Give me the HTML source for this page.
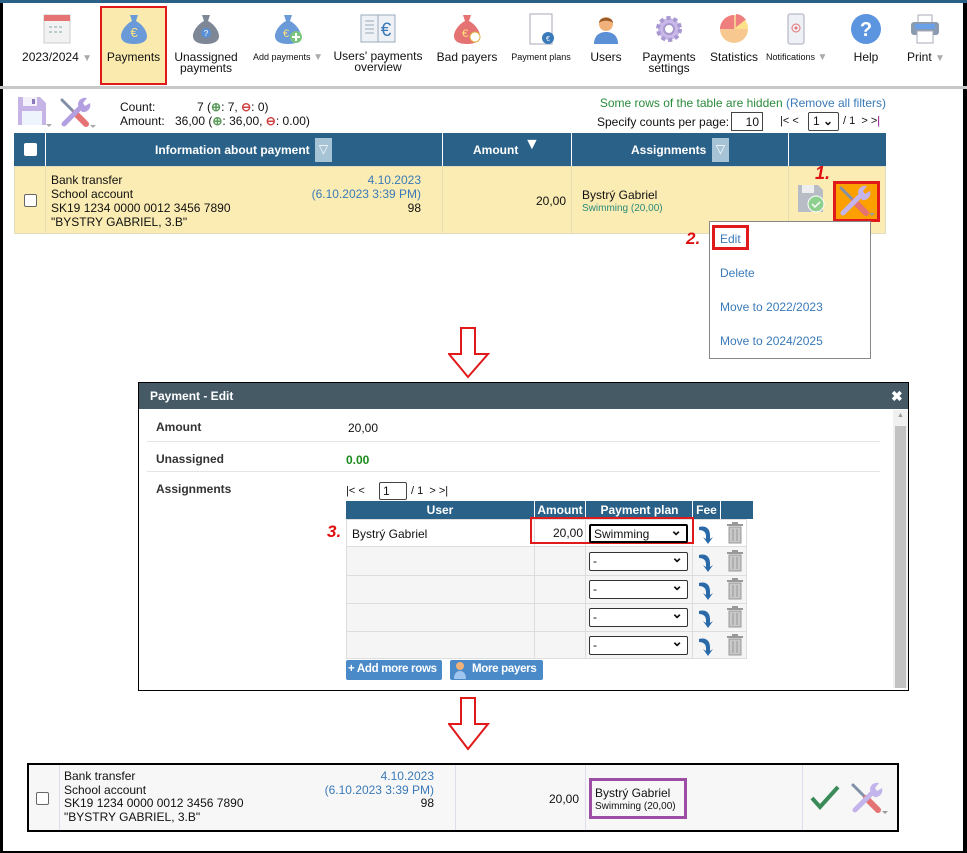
<!DOCTYPE html>
<html><head><meta charset="utf-8">
<style>
*{box-sizing:border-box;margin:0;padding:0}
body{width:967px;height:853px;background:#fff;font-family:"Liberation Sans",sans-serif;font-size:12px;color:#111;position:relative;overflow:hidden}
.a{position:absolute}
.tb{position:absolute;top:0;left:0;width:967px;height:89px;border-bottom:3px solid #c8c8c8;border-top:3px solid #2a5f88}
.ti{position:absolute;text-align:center;font-size:12px;line-height:11px;color:#111;white-space:nowrap}
.ti svg{display:block;margin:0 auto}
.ti div{margin-top:7px}
.tri{color:#aaa;font-size:10px}
.hdr{background:#2a6189;color:#fff;font-weight:bold;text-align:center}
.blue{color:#3a7ab8}
.red{color:#e01010;font-weight:bold;font-style:italic}
.sel{position:absolute;border:1px solid #333;background:#fff;height:19px;font-size:12px;padding:1px 3px;border-radius:2px}
.sel:after{content:"⌄";position:absolute;right:4px;top:-4px;font-weight:bold;font-size:14px}
</style></head><body>
<div class="a" style="left:0;top:0;width:3px;height:853px;background:#000"></div>
<div class="a" style="right:0;top:0;width:4px;height:853px;background:#000"></div>
<div class="a" style="left:0;bottom:0;width:967px;height:2px;background:#000"></div>

<div class="tb"></div>
<div class="a" style="left:100px;top:6px;width:67px;height:79px;background:#fbeaae;border:2px solid #e01a1a"></div>

<div class="ti" style="left:22px;top:13px;width:70px">
<svg width="32" height="32"><rect x="3" y="2" width="26" height="28" fill="#f2f2f2" stroke="#ccc"/><rect x="3" y="2" width="26" height="6" fill="#e57373"/><g fill="#bcc"><rect x="8" y="13" width="3" height="2"/><rect x="13" y="13" width="3" height="2"/><rect x="18" y="13" width="3" height="2"/><rect x="8" y="18" width="3" height="2"/><rect x="13" y="18" width="3" height="2"/><rect x="18" y="18" width="3" height="2"/></g></svg>
<div>2023/2024 <span class="tri">▼</span></div></div>

<div class="ti" style="left:102px;top:13px;width:63px">
<svg width="32" height="32"><path d="M12 2h8l-2 6c6 3 11 10 11 15 0 6-6 8-13 8S3 29 3 23c0-5 5-12 11-15z" fill="#6a9bd8"/><text x="16" y="24" font-size="13" fill="#ffe27a" text-anchor="middle" font-family="Liberation Sans">€</text></svg>
<div>Payments</div></div>

<div class="ti" style="left:172px;top:13px;width:68px">
<svg width="32" height="32"><path d="M12 2h8l-2 6c6 3 11 10 11 15 0 6-6 8-13 8S3 29 3 23c0-5 5-12 11-15z" fill="#7d8796"/><circle cx="16" cy="20" r="5" fill="#5b8fd6"/><text x="16" y="23" font-size="8" fill="#fff" text-anchor="middle" font-family="Liberation Sans">?</text></svg>
<div>Unassigned<br>payments</div></div>

<div class="ti" style="left:248px;top:13px;width:80px">
<svg width="32" height="32"><path d="M12 2h8l-2 6c6 3 11 10 11 15 0 6-6 8-13 8S3 29 3 23c0-5 5-12 11-15z" fill="#6a9bd8"/><text x="14" y="24" font-size="11" fill="#ffe27a" text-anchor="middle" font-family="Liberation Sans">€</text><circle cx="24" cy="24" r="6" fill="#7bc47b"/><path d="M24 20v8M20 24h8" stroke="#fff" stroke-width="2"/></svg>
<div style="font-size:9px">Add payments <span class="tri">▼</span></div></div>

<div class="ti" style="left:332px;top:12px;width:92px">
<svg width="38" height="33"><rect x="2" y="3" width="17" height="27" fill="#eef2f7" stroke="#9ab"/><rect x="19" y="3" width="17" height="27" fill="#eef2f7" stroke="#9ab"/><g stroke="#9ab"><path d="M6 9h9M6 13h9M6 17h9M6 21h9"/></g><text x="27" y="24" font-size="19" fill="#3a7ab8" text-anchor="middle" font-family="Liberation Sans">€</text></svg>
<div style="margin-top:6px">Users' payments<br>overview</div></div>

<div class="ti" style="left:434px;top:13px;width:66px">
<svg width="32" height="32"><path d="M12 2h8l-2 6c6 3 11 10 11 15 0 6-6 8-13 8S3 29 3 23c0-5 5-12 11-15z" fill="#e57373"/><text x="14" y="24" font-size="11" fill="#ffe27a" text-anchor="middle" font-family="Liberation Sans">€</text><circle cx="24" cy="24" r="5" fill="#fff" stroke="#e0b040"/></svg>
<div>Bad payers</div></div>

<div class="ti" style="left:506px;top:13px;width:70px">
<svg width="32" height="32"><rect x="5" y="1" width="22" height="30" fill="#fff" stroke="#aab"/><circle cx="23" cy="25" r="6" fill="#3a7ab8"/><text x="23" y="28" font-size="7" fill="#fff" text-anchor="middle">€</text></svg>
<div style="font-size:9px">Payment plans</div></div>

<div class="ti" style="left:584px;top:13px;width:44px">
<svg width="32" height="32"><path d="M4 31c0-8 5-12 12-12s12 4 12 12z" fill="#5b8fd6"/><circle cx="16" cy="11" r="7" fill="#f0b27a"/><path d="M9 10c0-7 14-7 14 0-3-3-11-3-14 0z" fill="#9a5a2a"/></svg>
<div>Users</div></div>

<div class="ti" style="left:636px;top:13px;width:66px">
<svg width="32" height="32"><circle cx="16" cy="16" r="11" fill="#c9b8e8" stroke="#a898d0" stroke-width="4" stroke-dasharray="4 3"/><circle cx="16" cy="16" r="5" fill="#fff" stroke="#a898d0" stroke-width="2"/></svg>
<div>Payments<br>settings</div></div>

<div class="ti" style="left:704px;top:13px;width:60px">
<svg width="32" height="32"><circle cx="16" cy="16" r="14" fill="#f7c890"/><path d="M16 16V2A14 14 0 0 0 2 16z" fill="#ef7f7f"/><path d="M18 14V1a13 13 0 0 1 10 6z" fill="#ef7f7f"/><path d="M16 16h14a14 14 0 0 0-3-9z" fill="#fde08a"/></svg>
<div>Statistics</div></div>

<div class="ti" style="left:766px;top:13px;width:60px">
<svg width="32" height="32"><rect x="8" y="1" width="16" height="30" rx="2" fill="#eef1f5" stroke="#aab"/><circle cx="16" cy="15" r="4" fill="none" stroke="#e57373"/><circle cx="16" cy="15" r="1.5" fill="#e57373"/></svg>
<div style="font-size:9px">Notifications <span class="tri">▼</span></div></div>

<div class="ti" style="left:844px;top:13px;width:44px">
<svg width="32" height="32"><circle cx="16" cy="16" r="15" fill="#5b95e0"/><text x="16" y="23" font-size="20" fill="#fff" text-anchor="middle" font-weight="bold" font-family="Liberation Sans">?</text></svg>
<div>Help</div></div>

<div class="ti" style="left:900px;top:13px;width:50px">
<svg width="32" height="32"><rect x="9" y="2" width="14" height="8" fill="#fff" stroke="#aab"/><rect x="2" y="9" width="28" height="13" rx="3" fill="#8a9aaf"/><rect x="6" y="11" width="20" height="5" fill="#6aa0e8"/><rect x="8" y="18" width="16" height="12" fill="#fff" stroke="#aab"/></svg>
<div style="text-align:left;padding-left:7px">Print <span class="tri">▼</span></div></div>

<!-- row 2 -->
<svg class="a" style="left:17px;top:96px" width="36" height="34"><path d="M1 1h22l6 6v22H1z" fill="#c6b4e6"/><rect x="6" y="1" width="14" height="9" fill="#f4f1fb"/><rect x="15" y="3" width="3" height="5" fill="#8a7ab8"/><rect x="5" y="15" width="20" height="14" fill="#eef4fb"/><path d="M29 28l3 3 3-3z" fill="#aaa"/></svg>
<svg class="a" style="left:58px;top:96px" width="40" height="34">
<path d="M4 4l12 12" stroke="#8090a8" stroke-width="3" stroke-linecap="round"/><path d="M17 17l11 11" stroke="#e57373" stroke-width="6" stroke-linecap="round"/>
<path d="M6 28l16-16" stroke="#b4a0e0" stroke-width="5" stroke-linecap="round"/><path d="M20 9a7 7 0 0 1 9-7l-4 5 2 3 5-3a7 7 0 0 1-8 9z" fill="#b4a0e0"/>
<path d="M32 29l3 3 3-3z" fill="#aaa"/></svg>
<div class="a" style="left:120px;top:100px;line-height:14px">Count:<br>Amount:</div>
<div class="a" style="left:175px;top:100px;line-height:14px;white-space:nowrap"><span style="padding-left:22px">7 (<b style="color:#5a9a5a">⊕</b>: 7, <b style="color:#d04040">⊖</b>: 0)</span><br>36,00 (<b style="color:#5a9a5a">⊕</b>: 36,00, <b style="color:#d04040">⊖</b>: 0.00)</div>
<div class="a" style="left:560px;top:96px;width:326px;text-align:right;color:#2a8a3a">Some rows of the table are hidden <span class="blue">(Remove all filters)</span></div>
<div class="a" style="left:597px;top:115px">Specify counts per page:</div>
<div class="a" style="left:731px;top:112px;width:32px;height:19px;border:1px solid #444;text-align:right;padding:2px 3px">10</div>
<div class="a" style="left:780px;top:115px;font-size:11px">|&lt; &lt;</div>
<div class="a" style="left:808px;top:112px;width:31px;height:19px;border:1px solid #444;padding:1px 4px;border-radius:2px">1 <b>⌄</b></div>
<div class="a" style="left:843px;top:115px;font-size:11px">/ 1 &nbsp;&gt; &gt;<span style="color:#808">|</span></div>

<!-- table -->
<div class="a hdr" style="left:14px;top:133px;width:872px;height:33px"></div>
<div class="a" style="left:24px;top:143px;width:13px;height:13px;background:#fff;border-radius:2px"></div>
<div class="a" style="left:45px;top:133px;width:1px;height:33px;background:#fff"></div>
<div class="a" style="left:442px;top:133px;width:1px;height:33px;background:#fff"></div>
<div class="a" style="left:571px;top:133px;width:1px;height:33px;background:#fff"></div>
<div class="a" style="left:788px;top:133px;width:1px;height:33px;background:#fff"></div>
<div class="a hdr" style="left:155px;top:143px;background:none">Information about payment</div>
<div class="a" style="left:315px;top:138px;width:17px;height:24px;background:#a7c4d6;color:#fff;text-align:center;line-height:22px">▽</div>
<div class="a hdr" style="left:473px;top:143px;background:none">Amount</div>
<div class="a" style="left:524px;top:136px;color:#fff;font-size:16px">▼</div>
<div class="a hdr" style="left:631px;top:143px;background:none">Assignments</div>
<div class="a" style="left:712px;top:138px;width:17px;height:24px;background:#a7c4d6;color:#fff;text-align:center;line-height:22px">▽</div>

<div class="a" style="left:14px;top:166px;width:872px;height:68px;background:#fbecb3;border:1px solid #e0dcc0"></div>
<div class="a" style="left:45px;top:166px;width:1px;height:68px;background:#e6dcb0"></div>
<div class="a" style="left:442px;top:166px;width:1px;height:68px;background:#e6dcb0"></div>
<div class="a" style="left:571px;top:166px;width:1px;height:68px;background:#e6dcb0"></div>
<div class="a" style="left:788px;top:166px;width:1px;height:68px;background:#e6dcb0"></div>
<div class="a" style="left:24px;top:194px;width:13px;height:13px;background:#fff;border:1px solid #666;border-radius:2px"></div>
<div class="a" style="left:51px;top:173px;line-height:14px">Bank transfer<br>School account<br>SK19 1234 0000 0012 3456 7890<br>"BYSTRY GABRIEL, 3.B"</div>
<div class="a" style="left:280px;top:173px;width:141px;text-align:right;line-height:14px"><span class="blue">4.10.2023<br>(6.10.2023 3:39 PM)</span><br>98</div>
<div class="a" style="left:450px;top:194px;width:116px;text-align:right">20,00</div>
<div class="a" style="left:582px;top:188px">Bystrý Gabriel</div>
<div class="a" style="left:582px;top:203px;font-size:10px;color:#2a8a7a">Swimming (20,00)</div>
<div class="a red" style="left:815px;top:163px;font-size:18px">1.</div>
<svg class="a" style="left:797px;top:184px" width="32" height="30"><path d="M1 1h20l5 5v22H1z" fill="#b8bcc4"/><rect x="5" y="1" width="12" height="8" fill="#eee"/><circle cx="19" cy="20" r="8" fill="#8ed08e" stroke="#fff"/><path d="M15 20l3 3 5-5" stroke="#fff" stroke-width="1.5" fill="none"/></svg>
<div class="a" style="left:833px;top:181px;width:47px;height:41px;background:#fca000;border:3px solid #e01a1a"></div>
<svg class="a" style="left:836px;top:184px" width="41" height="35">
<path d="M5 4l12 12" stroke="#8090a8" stroke-width="3" stroke-linecap="round"/><path d="M18 17l12 12" stroke="#e57373" stroke-width="6" stroke-linecap="round"/>
<path d="M7 29l17-17" stroke="#c4b4ec" stroke-width="5" stroke-linecap="round"/><path d="M22 9a7 7 0 0 1 9-7l-4 5 2 3 5-3a7 7 0 0 1-8 9z" fill="#c4b4ec"/>
<path d="M33 29l3 3 3-3z" fill="#999"/></svg>

<!-- dropdown -->
<div class="a" style="left:709px;top:221px;width:162px;height:138px;background:#fff;border:1px solid #888"></div>
<div class="a" style="left:712px;top:225px;width:37px;height:25px;border:3px solid #e01a1a"></div>
<div class="a blue" style="left:720px;top:232px">Edit</div>
<div class="a red" style="left:686px;top:229px;font-size:17px">2.</div>
<div class="a blue" style="left:720px;top:266px">Delete</div>
<div class="a blue" style="left:720px;top:300px">Move to 2022/2023</div>
<div class="a blue" style="left:720px;top:334px">Move to 2024/2025</div>

<!-- arrows -->
<svg class="a" style="left:448px;top:327px" width="42" height="52"><path d="M13 1h14v26h13L20 50 1 27h12z" fill="#fff" stroke="#e01a1a" stroke-width="2"/></svg>
<svg class="a" style="left:448px;top:697px" width="42" height="54"><path d="M13 1h14v26h13L20 52 1 27h12z" fill="#fff" stroke="#e01a1a" stroke-width="2"/></svg>

<!-- dialog -->
<div class="a" style="left:138px;top:382px;width:771px;height:309px;border:1px solid #000;background:#fff"></div>
<div class="a" style="left:139px;top:383px;width:769px;height:26px;background:#465a66"></div>
<div class="a" style="left:150px;top:389px;color:#fff;font-weight:bold">Payment - Edit</div>
<div class="a" style="left:891px;top:388px;color:#fff;font-weight:bold;font-size:14px">✖</div>
<div class="a" style="left:893px;top:410px;width:15px;height:278px;background:#f0f0f0"></div>
<div class="a" style="left:895px;top:426px;width:11px;height:262px;background:#c2c2c2"></div>
<div class="a" style="left:897px;top:412px;font-size:7px;color:#999">▲</div>
<div class="a" style="left:156px;top:420px;color:#333;font-weight:bold">Amount</div>
<div class="a" style="left:348px;top:421px">20,00</div>
<div class="a" style="left:147px;top:441px;width:733px;height:1px;background:#e4e4e4"></div>
<div class="a" style="left:156px;top:452px;color:#333;font-weight:bold">Unassigned</div>
<div class="a" style="left:346px;top:453px;color:#1a8a1a;font-weight:bold">0.00</div>
<div class="a" style="left:147px;top:471px;width:733px;height:1px;background:#e4e4e4"></div>
<div class="a" style="left:156px;top:482px;color:#333;font-weight:bold">Assignments</div>
<div class="a" style="left:346px;top:485px;font-size:11px">|&lt; &lt;</div>
<div class="a" style="left:379px;top:482px;width:28px;height:18px;border:1px solid #444;padding:1px 3px;border-radius:2px">1 <b>⌄</b></div>
<div class="a" style="left:411px;top:485px;font-size:11px">/ 1 &nbsp;&gt; &gt;|</div>
<div class="a hdr" style="left:346px;top:501px;width:407px;height:18px"></div>
<div class="a hdr" style="left:346px;top:503px;width:188px;background:none">User</div>
<div class="a hdr" style="left:535px;top:503px;width:50px;background:none">Amount</div>
<div class="a hdr" style="left:586px;top:503px;width:107px;background:none">Payment plan</div>
<div class="a hdr" style="left:693px;top:503px;width:27px;background:none">Fee</div>
<div class="a" style="left:534px;top:501px;width:1px;height:18px;background:#fff"></div>
<div class="a" style="left:585px;top:501px;width:1px;height:18px;background:#fff"></div>
<div class="a" style="left:692px;top:501px;width:1px;height:18px;background:#fff"></div>
<div class="a" style="left:720px;top:501px;width:1px;height:18px;background:#fff"></div>
<div class="a" style="left:346px;top:519px;width:401px;height:140px;background:#f5f5f5;border:1px solid #ddd"></div>
<div class="a" style="left:346px;top:519px;width:401px;height:28px;background:#fff;border:1px solid #ddd"></div>
<div class="a" style="left:346px;top:575px;width:401px;height:1px;background:#ddd"></div>
<div class="a" style="left:346px;top:603px;width:401px;height:1px;background:#ddd"></div>
<div class="a" style="left:346px;top:631px;width:401px;height:1px;background:#ddd"></div>
<div class="a" style="left:534px;top:519px;width:1px;height:140px;background:#ddd"></div>
<div class="a" style="left:585px;top:519px;width:1px;height:140px;background:#ddd"></div>
<div class="a" style="left:692px;top:519px;width:1px;height:140px;background:#ddd"></div>
<div class="a red" style="left:327px;top:522px;font-size:17px">3.</div>
<div class="a" style="left:352px;top:527px">Bystrý Gabriel</div>
<div class="a" style="left:530px;top:517px;width:164px;height:27px;border:2px solid #e01a1a"></div>
<div class="a" style="left:540px;top:526px;width:43px;text-align:right">20,00</div>
<div class="sel" style="left:589px;top:524px;width:99px;border:2px solid #000">Swimming</div>
<div class="sel" style="left:589px;top:552px;width:99px">-</div>
<div class="sel" style="left:589px;top:580px;width:99px">-</div>
<div class="sel" style="left:589px;top:608px;width:99px">-</div>
<div class="sel" style="left:589px;top:636px;width:99px">-</div>
<svg class="a" style="left:695px;top:522px" width="50" height="135">
<g id="r"><path d="M4 5c7-2 11 2 11 8v4l3-2-5 7-5-7 3 2v-3c0-4-3-6-7-6z" fill="#2a6aa8"/><rect x="32" y="2" width="16" height="2" fill="#999"/><rect x="37" y="0" width="6" height="3" fill="#999"/><rect x="34" y="5" width="12" height="16" fill="#c8c8c8" stroke="#999"/><path d="M38 7v12M42 7v12" stroke="#999"/></g>
<use href="#r" y="28"/><use href="#r" y="56"/><use href="#r" y="84"/><use href="#r" y="112"/></svg>
<div class="a" style="left:346px;top:660px;width:96px;height:20px;background:#4a8ac8;border-radius:2px;color:#fff;font-weight:bold;padding:3px 2px;font-size:11.5px;white-space:nowrap;letter-spacing:-0.3px">+ Add more rows</div>
<div class="a" style="left:450px;top:660px;width:93px;height:20px;background:#4a8ac8;border-radius:2px;color:#fff;font-weight:bold;padding:3px 0 0 22px;font-size:11.5px;white-space:nowrap;letter-spacing:-0.3px">More payers</div>
<svg class="a" style="left:453px;top:661px" width="14" height="18"><circle cx="7" cy="5" r="4" fill="#f0b27a"/><path d="M1 18c0-6 3-8 6-8s6 2 6 8z" fill="#9fc6ee"/></svg>

<!-- bottom row -->
<div class="a" style="left:27px;top:763px;width:872px;height:69px;border:2px solid #000;background:#f7f7f7"></div>
<div class="a" style="left:59px;top:765px;width:1px;height:65px;background:#dde"></div>
<div class="a" style="left:455px;top:765px;width:1px;height:65px;background:#dde"></div>
<div class="a" style="left:585px;top:765px;width:1px;height:65px;background:#dde"></div>
<div class="a" style="left:802px;top:765px;width:1px;height:65px;background:#dde"></div>
<div class="a" style="left:36px;top:792px;width:13px;height:13px;background:#fff;border:1px solid #666;border-radius:2px"></div>
<div class="a" style="left:64px;top:770px;line-height:13.5px">Bank transfer<br>School account<br>SK19 1234 0000 0012 3456 7890<br>"BYSTRY GABRIEL, 3.B"</div>
<div class="a" style="left:290px;top:770px;width:144px;text-align:right;line-height:13.5px"><span class="blue">4.10.2023<br>(6.10.2023 3:39 PM)</span><br>98</div>
<div class="a" style="left:500px;top:792px;width:79px;text-align:right">20,00</div>
<div class="a" style="left:589px;top:778px;width:98px;height:41px;border:3px solid #9b4ea4"></div>
<div class="a" style="left:595px;top:786px">Bystrý Gabriel</div>
<div class="a" style="left:595px;top:801px;font-size:10px">Swimming (20,00)</div>
<svg class="a" style="left:810px;top:784px" width="30" height="26"><path d="M2 14l8 9L28 3" stroke="#3a8a5a" stroke-width="4" fill="none"/></svg>
<svg class="a" style="left:848px;top:781px" width="42" height="36">
<path d="M5 4l12 12" stroke="#8090a8" stroke-width="3" stroke-linecap="round"/><path d="M18 17l12 12" stroke="#e57373" stroke-width="6" stroke-linecap="round"/>
<path d="M7 29l17-17" stroke="#c4b4ec" stroke-width="5" stroke-linecap="round"/><path d="M22 9a7 7 0 0 1 9-7l-4 5 2 3 5-3a7 7 0 0 1-8 9z" fill="#c4b4ec"/>
<path d="M34 30l3 3 3-3z" fill="#999"/></svg>
</body></html>
